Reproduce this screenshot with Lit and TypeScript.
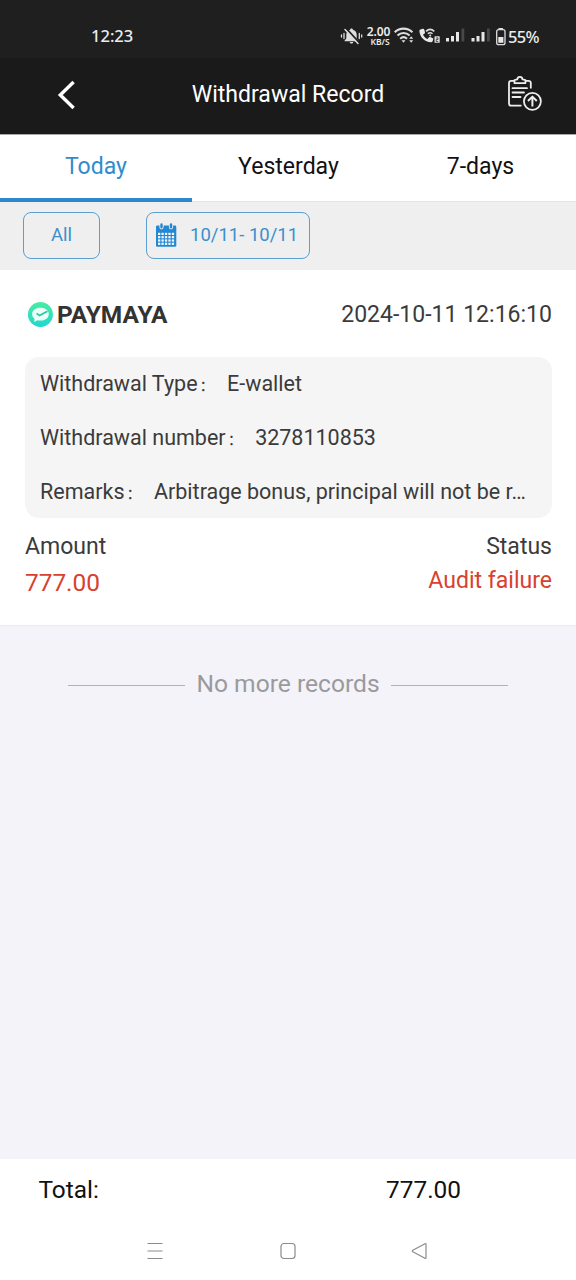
import { LitElement, html, svg, css } from "lit";
import { customElement, property } from "lit/decorators.js";

const base = css`
  :host { display: block; box-sizing: border-box; }
  * { box-sizing: border-box; }
  svg { display: block; flex: none; }
`;

@customElement("status-bar")
class StatusBar extends LitElement {
  static styles = [base, css`
    .bar { display: flex; height: 58px; background: #1f1f1f; color: #ececec; padding: 14px 0 0 91px; line-height: 44px;
      font-family: "Noto Sans", Roboto, sans-serif; font-weight: 500; }
    .time { width: 249px; font-size: 16.5px; letter-spacing: 0; }
    .icons { display: flex; height: 44px; }
    .speed { width: 27px; padding-top: 13px; display: flex; flex-direction: column; align-items: center; font-weight: 600; }
    .rate { font-size: 12px; line-height: 10px; letter-spacing: -0.1px; }
    .unit { font-size: 8.5px; line-height: 9px; padding-left: 3px; }
    .pct { font-size: 16.5px; padding-left: 1px; letter-spacing: -0.7px; line-height: 45px; }
  `];
  render() {
    return html`<div class="bar">
      <span class="time">12:23</span>
      <div class="icons">
        <svg width="25" height="44" viewBox="340 14 25 44" fill="#dedede">
          <path d="M351.500 28.500c.8 0 1.300.5 1.400 1.200 2.300.6 3.800 2.500 3.800 5v3.800l1.700 2v.8h-13.800v-.8l1.700-2v-3.800c0-2.500 1.500-4.400 3.800-5 .1-.7.6-1.200 1.400-1.200z"/>
          <path d="M349.700 42h3.600c-.2 1-.9 1.500-1.800 1.500s-1.600-.5-1.800-1.500z"/>
          <path d="M346 28.500L359 42.500" stroke="#1f1f1f" stroke-width="2"/>
          <path d="M345 29.500L358 43.500" stroke="#dedede" stroke-width="1.500" stroke-linecap="round"/>
          <path d="M341.500 35v2M344 33.500v5M361.700 35v2M359.300 33.500v5" stroke="#dedede" stroke-width="1.300" stroke-linecap="round"/>
        </svg>
        <div class="speed"><span class="rate">2.00</span><span class="unit">KB/S</span></div>
        <svg width="25" height="44" viewBox="392 14 25 44" fill="none" stroke="#dedede" stroke-width="2.100">
          <path d="M394.700 32.200c5-4.800 12.700-4.800 17.700 0M397.500 35.500c3.500-3.300 8.600-3.300 12.100 0M400.200 38.700c2-1.900 4.800-1.900 6.800 0"/>
          <path d="M401.500 40.300h4l-2 2.500zM409.200 38.700l2-2.500 2 2.500zM409.200 40.200l2 2.500 2-2.500z" fill="#dedede" stroke="none"/>
        </svg>
        <svg width="26" height="44" viewBox="417 14 26 44">
          <path d="M420.500 29.500l2.200-.8c.8-.2 1.300.1 1.500.8l.8 2.700c.1.600 0 1-.4 1.300l-1.600 1.200c1 2 2.400 3.300 4.400 4.200l1.400-1.500c.4-.4.9-.5 1.400-.3l2.300 1c.7.300.9.800.7 1.500l-.5 1.500c-.3.8-.8 1.200-1.600 1.200-6.500-.3-11.300-5.100-11.700-11.200 0-.8.300-1.300 1.100-1.600z" fill="#e8e8e8"/>
          <path d="M426 31.400c2.600-2.500 5.700-2.500 8.300 0M427.800 33.800c1.500-1.300 3.200-1.300 4.700 0" fill="none" stroke="#dedede" stroke-width="1.500"/>
          <circle cx="430.200" cy="35.600" r="1" fill="#dedede"/>
          <rect x="434.500" y="36.300" width="5.200" height="6.500" rx=".4" fill="#e0e0e0"/>
          <path d="M436 37.900h2v1.600h-1.800v2h2" fill="none" stroke="#333" stroke-width=".8"/>
        </svg>
        <svg width="51" height="44" viewBox="443 14 51 44">
          ${[446, 471.5].map((x) => svg`
            <g fill="#e6e6e6">
              <rect x=${x} y="38" width="3" height="3.500"/><rect x=${x + 5} y="36" width="3" height="5.500"/>
              <rect x=${x + 10} y="32" width="3" height="9.500"/><rect x=${x + 15.5} y="28.500" width="2.800" height="13" fill="#484848"/>
            </g>`)}
        </svg>
        <svg width="13" height="44" viewBox="494 14 13 44">
          <path d="M498.500 28h4.500v1.500h-4.500z" fill="#ddd"/>
          <rect x="496.700" y="29.700" width="8.300" height="15" rx="2" fill="none" stroke="#ddd" stroke-width="1.300"/>
          <rect x="498.300" y="37" width="5.100" height="5.800" fill="#e8e8e8"/>
        </svg>
        <span class="pct">55%</span>
      </div>
    </div>`;
  }
}

@customElement("page-header")
class PageHeader extends LitElement {
  @property() heading = "";
  static styles = [base, css`
    .header { display: grid; grid-template-columns: 96px 1fr 96px; align-items: center; height: 76px; background: #1a1a1a; color: #fff; padding-bottom: 4px; }
    .title { text-align: center; font-size: 23.040px; line-height: 34px; padding-top: 2px; }
    .back { margin-left: 56px; }
    .export { margin-left: 25px; }
  `];
  render() {
    return html`<div class="header">
      <svg class="back" width="20" height="32" viewBox="0 0 20 32" fill="none" stroke="#fff" stroke-width="3.400"><path d="M17.600 4L4.300 17l13.300 13"/></svg>
      <div class="title">${this.heading}</div>
      <svg class="export" width="40" height="40" viewBox="505 73 40 40" fill="none" stroke="#eee" stroke-width="1.800" stroke-linejoin="round">
        <path d="M514.500 79.800h-3.200a2.300 2.300 0 0 0-2.300 2.300v20.300a2.300 2.300 0 0 0 2.300 2.300H521.500M525.500 79.800h3a2.300 2.300 0 0 1 2.300 2.300v5.400"/>
        <path d="M514.500 82.200v-3.200l2.800-.7c.2-1.600 1.200-2.500 2.600-2.500s2.400.9 2.600 2.500l2.900.7v3.200z"/>
        <path d="M512.500 87.200h14.500M512.500 91.500h11.500M512.500 96h8" stroke-linecap="round"/>
        <circle cx="532.400" cy="100.300" r="8.500"/>
        <path d="M532.400 105.500V96M528 100l4.400-4.400 4.400 4.400" stroke-width="2"/>
      </svg>
    </div>`;
  }
}

@customElement("range-tabs")
class RangeTabs extends LitElement {
  static styles = [base, css`
    .tabs { display: grid; grid-template-columns: repeat(3, 1fr); grid-template-rows: 67px; height: 68px; background: #fff; border-top: 1px solid #a8a8a8; }
    .tab { text-align: center; font-size: 23.040px; line-height: 63px; padding-left: 1px; border-bottom: 1px solid #e2e4e5; color: #111; }
    .active { color: #2f8dcf; border-bottom: 4px solid #2c87cc; padding-left: 0; }
  `];
  render() {
    return html`<div class="tabs">
      ${["Today", "Yesterday", "7-days"].map((t, i) => html`<div class="tab ${i === 0 ? "active" : ""}">${t}</div>`)}
    </div>`;
  }
}

@customElement("filter-bar")
class FilterBar extends LitElement {
  static styles = [base, css`
    .filters { display: flex; gap: 46px; height: 68px; padding: 10px 23px 0; background: #efefef; color: #3a90cd; font-size: 18.500px; }
    .chip { display: flex; align-items: center; justify-content: center; height: 47px; border: 1px solid #5b9fce; border-radius: 8px; line-height: 46px; padding-bottom: 1px; }
    .all { width: 77px; }
    .range { width: 164px; justify-content: flex-start; padding-left: 8px; gap: 13px; white-space: nowrap; }
  `];
  render() {
    const cells = [0, 1, 2, 3, 4].flatMap((c) => [0, 1, 2, 3].map((r) => [c, r]));
    return html`<div class="filters">
      <div class="chip all">All</div>
      <div class="chip range">
        <svg width="22" height="26" viewBox="0 0 22 26">
          <rect x="1" y="3.500" width="20.300" height="21.300" rx="1.400" fill="#2388d3"/>
          <path d="M6.500 2.500v2.800M16 2.500v2.800" stroke="#efefef" stroke-width="4.200" stroke-linecap="round"/>
          <path d="M6.500 2.500v2.800M16 2.500v2.800" stroke="#2388d3" stroke-width="2.400" stroke-linecap="round"/>
          ${cells.map(([c, r]) => svg`<rect x=${3 + c * 3.45} y=${10.8 + r * 3.3} width="2.300" height="2.200" fill="#f4faff"/>`)}
        </svg>
        <span>10/11- 10/11</span>
      </div>
    </div>`;
  }
}

@customElement("record-card")
class RecordCard extends LitElement {
  static styles = [base, css`
    .card { height: 356px; background: #fff; color: #3b3b3b; padding: 23px 24px 0 25px; border-bottom: 1px solid #ececee; }
    .head { display: flex; align-items: center; height: 43px; }
    .logo { margin: 0 3px 0 2px; }
    .brand { font-size: 24.500px; font-weight: 700; color: #333; flex: 1; }
    .date { font-size: 23.040px; }
    .details { margin-top: 21px; height: 161px; border-radius: 14px; background: #f5f5f5; padding: 0 20px 0 15px; }
    .row { display: flex; height: 54px; line-height: 54px; font-size: 21.500px; white-space: nowrap; }
    .label { flex: none; display: flex; align-items: baseline; }
    .colon { width: 29.500px; padding-left: 2px; font-family: "Noto Sans CJK SC", sans-serif; font-size: 15px; line-height: 50px; }
    .value { flex: none; }
    .summary { display: flex; justify-content: space-between; margin-top: 11px; font-size: 23.040px; line-height: 36px; }
    .right { text-align: right; }
    .amount { color: #d8412f; font-size: 24.400px; line-height: 35px; }
    .failure { color: #d8412f; line-height: 32px; }
  `];
  render() {
    const rows = [
      ["Withdrawal Type", "E-wallet"],
      ["Withdrawal number", "3278110853"],
      ["Remarks", "Arbitrage bonus, principal will not be r…"],
    ];
    return html`<div class="card">
      <div class="head">
        <svg class="logo" width="27" height="27" viewBox="0 0 27 27">
          <defs><linearGradient id="g" x1="0" y1="0" x2="0" y2="1"><stop offset="0" stop-color="#45eea2"/><stop offset="1" stop-color="#22d6cf"/></linearGradient></defs>
          <circle cx="13.400" cy="13.500" r="12.500" fill="url(#g)"/>
          <path d="M13.500 6.800c4.700 0 8.300 2.700 8.300 6.400s-3.600 6.400-8.300 6.400c-1.100 0-2.100-.1-3-.4L7.200 21l.3-3.300c-1.600-1.200-2.400-2.700-2.400-4.500 0-3.700 3.700-6.400 8.400-6.400z" fill="#e9fff8"/>
          <path d="M9.500 12.300l3 2.200 8-4.300" fill="none" stroke="#31c3a2" stroke-width="1.600"/>
        </svg>
        <span class="brand">PAYMAYA</span>
        <span class="date">2024-10-11 12:16:10</span>
      </div>
      <div class="details">
        ${rows.map(([k, v]) => html`<div class="row"><span class="label">${k}<span class="colon">：</span></span><span class="value">${v}</span></div>`)}
      </div>
      <div class="summary">
        <div><div>Amount</div><div class="amount">777.00</div></div>
        <div class="right"><div>Status</div><div class="failure">Audit failure</div></div>
      </div>
    </div>`;
  }
}

@customElement("nav-bar")
class NavBar extends LitElement {
  static styles = [base, css`
    .nav { display: flex; justify-content: space-between; align-items: center; height: 59px; padding: 0 146px 0 145px; background: #fff; }
  `];
  render() {
    return html`<div class="nav">
      <svg width="20" height="20" viewBox="0 0 20 20" stroke="#8c8c8c" stroke-width="1.200"><path d="M2.500 2.500h15M2.500 10h15M2.500 17.500h15"/></svg>
      <svg width="20" height="20" viewBox="0 0 20 20" fill="none" stroke="#8c8c8c" stroke-width="1.200"><rect x="3" y="2.500" width="14" height="15" rx="3"/></svg>
      <svg width="20" height="20" viewBox="0 0 20 20" fill="none" stroke="#8c8c8c" stroke-width="1.200" stroke-linejoin="round"><path d="M16 3.200v13.600q0 1-1 .5L2.800 10.700q-1-.7 0-1.400L15 2.700q1-.5 1 .5z"/></svg>
    </div>`;
  }
}

@customElement("app-root")
class AppRoot extends LitElement {
  static styles = [base, css`
    :host { display: block; width: 576px; height: 1280px; font-family: Roboto, sans-serif; }
    .page { display: flex; flex-direction: column; height: 100%; background: #f4f3f9; }
    .end { flex: 1; padding: 38px 68px 0; }
    .line { display: flex; align-items: center; gap: 11.500px; color: #9a9a9c; font-size: 24.600px; line-height: 40px; white-space: nowrap; }
    .rule { flex: 1; height: 1px; background: #b2b2b6; margin-top: 3px; }
    .total { display: flex; justify-content: space-between; height: 62px; line-height: 62px; background: #fff; color: #111; padding: 0 115px 0 38.500px; font-size: 24.400px; }
  `];
  render() {
    return html`<div class="page">
      <status-bar></status-bar>
      <page-header heading="Withdrawal Record"></page-header>
      <range-tabs></range-tabs>
      <filter-bar></filter-bar>
      <record-card></record-card>
      <div class="end"><div class="line"><span class="rule"></span><span>No more records</span><span class="rule"></span></div></div>
      <div class="total"><span>Total:</span><span>777.00</span></div>
      <nav-bar></nav-bar>
    </div>`;
  }
}
